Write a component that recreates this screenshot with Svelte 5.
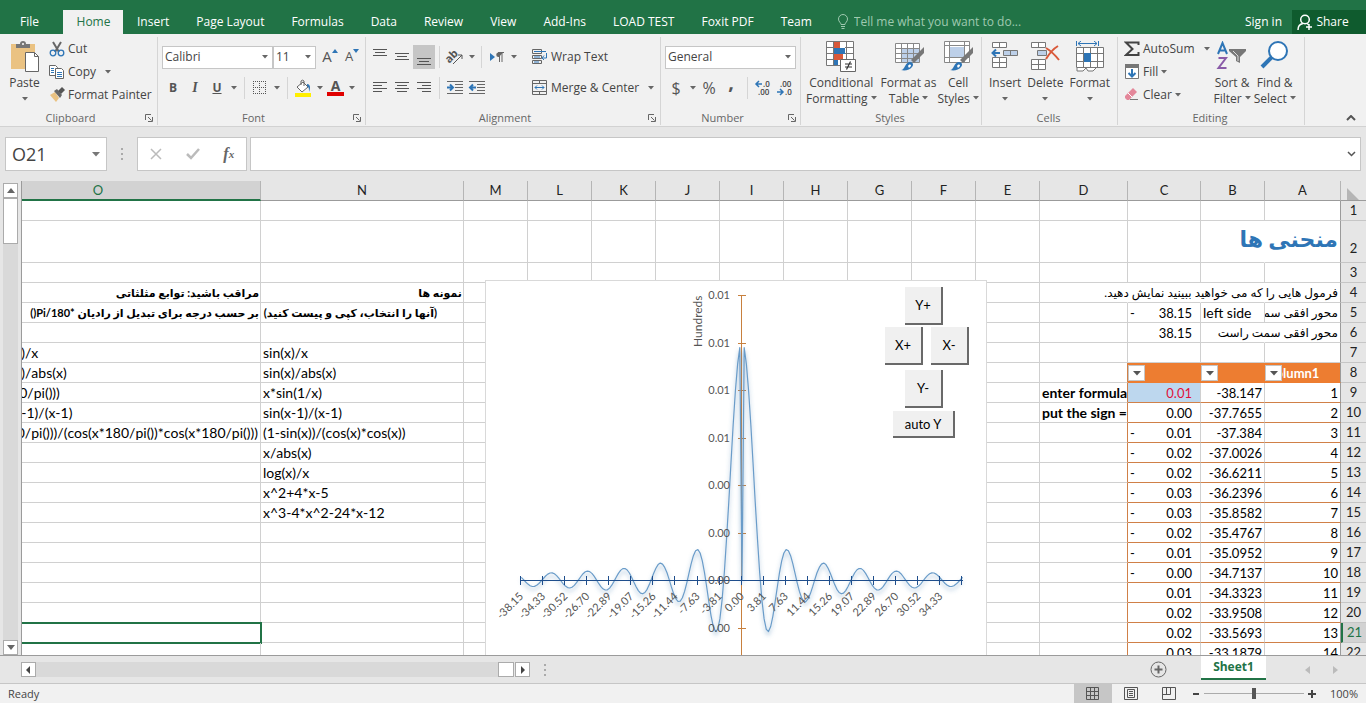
<script>
  const tabs = ['Insert', 'Page Layout', 'Formulas', 'Data', 'Review', 'View', 'Add-Ins', 'LOAD TEST', 'Foxit PDF', 'Team'];

  // sheet runs right to left, so A is the rightmost column
  const columns = [
    { name: 'A', width: 76 },
    { name: 'B', width: 64 },
    { name: 'C', width: 73 },
    { name: 'D', width: 88 },
    ...['E', 'F', 'G', 'H', 'I', 'J', 'K', 'L', 'M'].map((name) => ({ name, width: 64 })),
    { name: 'N', width: 203 },
    { name: 'O', width: 325 },
  ];

  const rows = Array.from({ length: 22 }, (_, i) => i + 1);

  const cells = {
    A2: { text: 'منحنی ها', cls: 'title' },
    A4: { text: 'فرمول هایی را که می خواهید ببینید نمایش دهید.', cls: 'fa' },
    A5: { text: 'محور افقی سمت', cls: 'fa clip' },
    A6: { text: 'محور افقی سمت راست', cls: 'fa' },
    B5: { text: 'left side', cls: 'ltr' },
    C5: { text: '38.15', cls: 'acc', neg: true },
    C6: { text: '38.15', cls: 'acc' },
    D9: { text: 'enter formula', cls: 'ltr strong clip' },
    D10: { text: 'put the sign =', cls: 'ltr strong clip' },
    N4: { text: 'نمونه ها', cls: 'fa strong' },
    N5: { text: '(آنها را انتخاب، کپی و پیست کنید)', cls: 'fa strong far' },
    O4: { text: 'مراقب باشید: توابع مثلثاتی', cls: 'fa strong' },
    O5: { text: 'بر حسب درجه برای تبدیل از رادیان *Pi/180()', cls: 'fa strong' },
  };

  const formulas = [
    ['sin(x)/x', 'sin(x*180/pi())/x'],
    ['sin(x)/abs(x)', 'sin(x*180/pi())/abs(x)'],
    ['x*sin(1/x)', 'x*sin(1/(x*180/pi()))'],
    ['sin(x-1)/(x-1)', 'sin(x*180/pi()-1)/(x-1)'],
    ['(1-sin(x))/(cos(x)*cos(x))', '(1-sin(x*180/pi()))/(cos(x*180/pi())*cos(x*180/pi()))'],
    ['x/abs(x)'],
    ['log(x)/x'],
    ['x^2+4*x-5'],
    ['x^3-4*x^2-24*x-12'],
  ];
  formulas.forEach(([n, o], i) => {
    cells['N' + (7 + i)] = { text: n, cls: 'ltr' };
    if (o) cells['O' + (7 + i)] = { text: o, cls: o.length > 40 ? 'ltr long' : 'ltr' };
  });

  const values = [
    ['-38.147', '0.01'],
    ['-37.7655', '0.00'],
    ['-37.384', '-0.01'],
    ['-37.0026', '-0.02'],
    ['-36.6211', '-0.02'],
    ['-36.2396', '-0.03'],
    ['-35.8582', '-0.03'],
    ['-35.4767', '-0.02'],
    ['-35.0952', '-0.01'],
    ['-34.7137', '-0.00'],
    ['-34.3323', '0.01'],
    ['-33.9508', '0.02'],
    ['-33.5693', '0.02'],
    ['-33.1879', '0.03'],
  ];
  values.forEach(([x, y], i) => {
    cells['A' + (9 + i)] = { text: String(i + 1), cls: 'num' };
    cells['B' + (9 + i)] = { text: x, cls: 'num' };
    cells['C' + (9 + i)] = { text: y.replace('-', ''), cls: i ? 'acc' : 'acc picked', neg: y[0] === '-' };
  });

  // gridlines hidden under text that spills into the next column
  const spilled = ['B2', 'B4', 'C4', 'D4', 'B6'];

  function cellClass(col, row) {
    const id = col + row;
    const list = [];
    if (spilled.includes(id)) list.push('spilled');
    if ('ABC'.includes(col) && row === 8) list.push('filter-head');
    if ('ABC'.includes(col) && row > 8) list.push('banded');
    if (col === 'D' && row > 7) list.push('edge');
    if (id === 'O21') list.push('active');
    if (id === 'C9') list.push('input-cell');
    return list.join(' ');
  }

  // chart geometry
  const axisX = 742;
  const axisY = 580;
  const step = 0.38147;
  let curve = '';
  for (let i = -100; i <= 100; i++) {
    const x = i * step;
    const y = i === 0 ? 0 : Math.sin(x) / x;
    curve += `${i === -100 ? 'M' : 'L'}${(axisX + x * 5.786).toFixed(1)} ${(axisY - y * 238).toFixed(1)}`;
  }
  const xLabels = ['-38.15', '-34.33', '-30.52', '-26.70', '-22.89', '-19.07', '-15.26', '-11.44', '-7.63', '-3.81', '0.00', '3.81', '7.63', '11.44', '15.26', '19.07', '22.89', '26.70', '30.52', '34.33'];
  const yLabels = ['0.01', '0.01', '0.01', '0.01', '0.00', '0.00', '0.00', '0.00'];
  const tickX = (i) => 521 + i * 22.07;
  const tickY = (i) => 295 + i * 47.5;

  let fontName = $state('Calibri');
  let fontSize = $state('11');
  let numberFormat = $state('General');
</script>

{#snippet caret()}
  <svg class="caret" width="6" height="4" viewBox="0 0 6 4"><path d="M0 0h6L3 3.5z" fill="#666" /></svg>
{/snippet}

{#snippet launcher()}
  <button class="launcher" aria-label="More options">
    <svg width="8" height="8" viewBox="0 0 8 8"><path d="M.5 6V.5H6M3 3l3.5 3.5M7.5 3v4.5H3" fill="none" stroke="#666" /></svg>
  </button>
{/snippet}

{#snippet lines(list)}
  <svg width="16" height="16" viewBox="0 0 16 16">
    {#each list as [x1, x2, y]}<path d="M{x1} {y}.5H{x2}" stroke="#555" />{/each}
  </svg>
{/snippet}

{#snippet indent(toRight)}
  <svg width="18" height="14" viewBox="0 0 18 14">
    <path d="M1 .5h16M9 3.5h8M9 6.5h8M9 9.5h8M1 12.5h16" stroke="#666" />
    <path d={toRight ? 'M1 6.5h6M4 3.5l3 3-3 3' : 'M2 6.5h6M5 3.5l-3 3 3 3'} fill="none" stroke="#2e75b6" stroke-width="2" />
  </svg>
{/snippet}

{#snippet brush()}
  <path d="M31 6v6L21 22l-3-3z" fill="#777" />
  <path d="M8 29c4 0 4-8 9-8 3 0 4 3 2 5-2 3-7 4-11 3z" fill="#2e75b6" />
  <path d="M15 25c1-2 3-2 3 0l-2 2z" fill="#fff" />
{/snippet}

<div class="excel">
  <header class="tabs">
    <button class="tab file">File</button>
    <button class="tab home">Home</button>
    {#each tabs as tab}
      <button class="tab">{tab}</button>
    {/each}
    <label class="tell">
      <svg width="12" height="16" viewBox="0 0 12 16" fill="none" stroke="#9fc9b0">
        <path d="M4 10.5C4 8.5 1.5 8 1.5 5a4.5 4.5 0 0 1 9 0c0 3-2.5 3.5-2.5 5.5zM4 12.5h4M4.5 14.5h3" />
      </svg>
      <input placeholder="Tell me what you want to do..." />
    </label>
    <button class="signin">Sign in</button>
    <button class="share">
      <svg width="16" height="17" viewBox="0 0 16 17" fill="none" stroke="#fff" stroke-width="1.5">
        <circle cx="8" cy="5.5" r="4.3" /><path d="M1 16c0-4 2-6 5-6.5M10 9.5l2 1.5M12 10v6M9 13h6" />
      </svg>
      Share
    </button>
  </header>

  <section class="ribbon">
    <div class="group">
      <div class="body">
        <button class="big paste">
          <svg width="30" height="32" viewBox="0 0 30 32">
            <path d="M1 3h24v25H1z" fill="#eac282" />
            <path d="M6 7V3h4a3 3 0 0 1 6 0h4v4z" fill="#777" /><circle cx="13" cy="3" r="1" fill="#fff" />
            <path d="M15.5 11.5h9l4 4v15h-13z" fill="#fff" stroke="#666" /><path d="M24.5 11.5v4h4" fill="none" stroke="#666" />
          </svg>
          <span>Paste</span>
          {@render caret()}
        </button>
        <div class="stack">
          <button class="small">
            <svg width="16" height="16" viewBox="0 0 16 16" fill="none">
              <path d="M4 1l6 10M12 1L6 11" stroke="#666" stroke-width="2" />
              <circle cx="4" cy="12" r="2.8" stroke="#2e75b6" stroke-width="1.3" /><circle cx="12" cy="12" r="2.8" stroke="#2e75b6" stroke-width="1.3" />
            </svg>
            Cut
          </button>
          <button class="small">
            <svg width="16" height="16" viewBox="0 0 16 16" fill="#fff" stroke="#666">
              <path d="M.5 1.5h6l2 2v8h-8z" /><path d="M6.500 4.5h6l2 2v8h-8z" />
              <path d="M2 4.5h3M2 6.500h3M2 8.5h3M8 8.5h5M8 10.5h5M8 12.5h5" stroke="#2e75b6" />
            </svg>
            Copy <span class="push">{@render caret()}</span>
          </button>
          <button class="small">
            <svg width="16" height="16" viewBox="0 0 16 16">
              <path d="M1 8l5-3 4 6-3 4z" fill="#eac282" /><path d="M5 4l3-2 5 6-2 3z" fill="#666" /><path d="M9 4l4-4 3 3-4 4z" fill="#555" />
            </svg>
            Format Painter
          </button>
        </div>
      </div>
      <footer>Clipboard {@render launcher()}</footer>
    </div>

    <div class="group">
      <div class="body col">
        <div class="line">
          <span class="combo name">
            <select aria-label="Font" bind:value={fontName}><option>Calibri</option></select>{@render caret()}
          </span>
          <span class="combo size">
            <select aria-label="Font size" bind:value={fontSize}><option>11</option></select>{@render caret()}
          </span>
          <button class="tool grow">A<svg width="6" height="4" viewBox="0 0 6 4"><path d="M0 4h6L3 0z" fill="#2e75b6" /></svg></button>
          <button class="tool shrink">A<svg width="6" height="4" viewBox="0 0 6 4"><path d="M0 0h6L3 4z" fill="#2e75b6" /></svg></button>
        </div>
        <div class="line">
          <button class="tool bold">B</button>
          <button class="tool italic">I</button>
          <button class="tool underline">U</button>
          <button class="drop" aria-label="Underline styles">{@render caret()}</button>
          <i class="sep"></i>
          <button class="tool" aria-label="Borders">
            <svg width="14" height="14" viewBox="0 0 14 14" fill="none" stroke="#555" stroke-dasharray="1 1">
              <path d="M0 .5h13M0 6.500h13M0 12.5h13M.5 0v13M6.500 0v13M12.5 0v13" />
            </svg>
          </button>
          <button class="drop" aria-label="Border styles">{@render caret()}</button>
          <i class="sep"></i>
          <button class="tool" aria-label="Fill color">
            <svg width="18" height="18" viewBox="0 0 18 18">
              <path d="M3 8l6-5 5 5-6 5z" fill="#fff" stroke="#666" /><path d="M7 6V2a2 2 0 0 1 3 0v5" fill="none" stroke="#666" />
              <path d="M13 5c3 0 4 3 2 8 0-3 0-5-2-6z" fill="#2e75b6" /><path d="M1 14h16v4H1z" fill="#ffef00" />
            </svg>
          </button>
          <button class="drop" aria-label="Fill colors">{@render caret()}</button>
          <button class="tool font-color">A</button>
          <button class="drop" aria-label="Font colors">{@render caret()}</button>
        </div>
      </div>
      <footer>Font {@render launcher()}</footer>
    </div>

    <div class="group">
      <div class="body">
        <div class="col align">
          <div class="line">
            <button class="tool" aria-label="Top align">{@render lines([[1, 15, 0], [3, 13, 3], [1, 15, 6]])}</button>
            <button class="tool" aria-label="Middle align">{@render lines([[1, 15, 4], [3, 13, 7], [1, 15, 10]])}</button>
            <button class="tool on" aria-label="Bottom align">{@render lines([[1, 15, 9], [3, 13, 12], [1, 15, 15]])}</button>
            <i class="sep"></i>
            <button class="tool" aria-label="Orientation">
              <svg class="loose" width="18" height="16" viewBox="0 0 18 16">
                <text x="0" y="11" class="ab" transform="rotate(-45 6 9)">ab</text>
                <path d="M7 15l9-9M12 6h4v4" fill="none" stroke="#555" />
              </svg>
            </button>
            <button class="drop" aria-label="Orientations">{@render caret()}</button>
            <i class="sep"></i>
            <button class="tool" aria-label="Text direction">
              <svg width="14" height="12" viewBox="0 0 14 12">
                <path d="M0 2v8l5-4z" fill="#2e75b6" /><path d="M13 1.5H8.5a2 2 0 0 0 0 4.5H9" fill="#666" /><path d="M9.5 1v10M12 1v10M8 1.5h6" stroke="#666" />
              </svg>
            </button>
            <button class="drop" aria-label="Directions">{@render caret()}</button>
          </div>
          <div class="line">
            <button class="tool" aria-label="Align left">{@render lines([[1, 15, 2], [1, 10, 5], [1, 15, 8], [1, 10, 11]])}</button>
            <button class="tool" aria-label="Center">{@render lines([[1, 15, 2], [3, 13, 5], [1, 15, 8], [3, 13, 11]])}</button>
            <button class="tool" aria-label="Align right">{@render lines([[1, 15, 2], [6, 15, 5], [1, 15, 8], [6, 15, 11]])}</button>
            <i class="sep"></i>
            <button class="tool" aria-label="Increase indent">{@render indent(true)}</button>
            <button class="tool" aria-label="Decrease indent">{@render indent(false)}</button>
          </div>
        </div>
        <div class="col wrap">
          <button class="small">
            <svg width="16" height="16" viewBox="0 0 16 16" fill="none" stroke="#666">
              <path d="M.5 .5h9v4h-9zM.5 6.500h9v3h-9zM.5 11.500h9v3h-9z" /><path d="M2 2.5h12M2 8h6M2 13h5M14.5 4v5h-4M12 6.500L10 9l2 2" stroke="#2e75b6" />
            </svg>
            Wrap Text
          </button>
          <button class="small">
            <svg width="16" height="16" viewBox="0 0 16 16" fill="none" stroke="#666">
              <path d="M.5 .5h14v14H.5zM.5 3.5h14M.5 11.500h14M7.5 .5v3M7.5 11.500v3" /><path d="M3 7.5h9M5 5.5l-2 2 2 2M10 5.5l2 2-2 2" stroke="#2e75b6" />
            </svg>
            Merge &amp; Center <span class="push">{@render caret()}</span>
          </button>
        </div>
      </div>
      <footer>Alignment {@render launcher()}</footer>
    </div>

    <div class="group">
      <div class="body col">
        <div class="line">
          <span class="combo format">
            <select aria-label="Number format" bind:value={numberFormat}><option>General</option></select>{@render caret()}
          </span>
        </div>
        <div class="line">
          <button class="tool sign">$</button>
          <button class="drop" aria-label="Currencies">{@render caret()}</button>
          <button class="tool sign">%</button>
          <button class="tool comma">,</button>
          <i class="sep"></i>
          <button class="tool" aria-label="Increase decimal">
            <svg class="loose" width="16" height="16" viewBox="0 0 16 16"><text x="8" y="7" class="dec">.0</text><text x="3" y="15" class="dec">.00</text><path d="M1 4h6M4 1L1 4l3 3" fill="none" stroke="#2e75b6" stroke-width="1.5" /></svg>
          </button>
          <button class="tool" aria-label="Decrease decimal">
            <svg class="loose" width="16" height="16" viewBox="0 0 16 16"><text x="3" y="7" class="dec">.00</text><text x="8" y="15" class="dec">.0</text><path d="M0 12h6M3 9l3 3-3 3" fill="none" stroke="#2e75b6" stroke-width="1.5" /></svg>
          </button>
        </div>
      </div>
      <footer>Number {@render launcher()}</footer>
    </div>

    <div class="group">
      <div class="body styles">
        <button class="big">
          <svg width="32" height="32" viewBox="0 0 32 32">
            <path d="M1.5 .5h27v24h-27z" fill="#fff" />
            <path d="M9 1h6v6H9zM9 13h9v6H9z" fill="#d9593a" /><path d="M9 7h11v6H9zM9 19h4v6H9z" fill="#2e75b6" />
            <path d="M1.5 .5h27v24h-27zM1.5 6.500h7M20 6.500h8.500M1.5 12.5h7M20 12.5h8.500M1.5 18.5h7M8.5 .5v24M21.500 .5v24" fill="none" stroke="#777" />
            <path d="M15.5 18.5h15v12h-15z" fill="#fff" stroke="#666" /><path d="M20 23h7M20 26h7M25.500 20.500l-4 8" stroke="#333" stroke-width="1.2" />
          </svg>
          <span>Conditional</span><span>Formatting {@render caret()}</span>
        </button>
        <button class="big">
          <svg width="32" height="32" viewBox="0 0 32 32">
            <path d="M2.5 2.5h24v19h-24z" fill="#fff" /><path d="M8 8h18v13H8z" fill="#bdd0e9" />
            <path d="M2.5 2.5h24v19h-24zM2.5 7.5h24M2.5 12.5h24M2.5 17.5h24M8.5 2.5v19M14.5 2.5v19M20.5 2.5v19" fill="none" stroke="#888" />
            {@render brush()}
          </svg>
          <span>Format as</span><span>Table {@render caret()}</span>
        </button>
        <button class="big">
          <svg width="32" height="32" viewBox="0 0 32 32">
            <path d="M2.5 .5h25v21h-25z" fill="#fff" />
            <path d="M2.5 .5h25v21h-25zM2.5 4.5h25M2.5 16.5h25M7.5 .5v21M22.5 .5v21" fill="none" stroke="#888" /><path d="M8 6h14v10H8z" fill="#bdd0e9" />
            {@render brush()}
          </svg>
          <span>Cell</span><span>Styles {@render caret()}</span>
        </button>
      </div>
      <footer>Styles</footer>
    </div>

    <div class="group">
      <div class="body cells">
        <button class="big">
          <svg width="30" height="32" viewBox="0 0 30 32" fill="#fff" stroke="#777">
            <path d="M2.5 1.5h14v5h-14zM9.5 1.5v5M2.5 16.5h14v10h-14zM2.5 21.5h14M9.5 16.5v10" />
            <path d="M13.5 9.5h14v5h-14zM20.5 9.5v5" fill="#bdd0e9" /><path d="M2 12h8M6 8.5L2.5 12 6 15.5" fill="none" stroke="#2e75b6" stroke-width="2" />
          </svg>
          <span>Insert</span>{@render caret()}
        </button>
        <button class="big">
          <svg width="30" height="32" viewBox="0 0 30 32" fill="#fff" stroke="#777">
            <path d="M1.5 1.5h14v5h-14zM8.5 1.5v5M1.5 18.5h14v10h-14zM1.5 23.5h14M8.5 18.5v10" />
            <path d="M7.5 9.5h9v5h-9z" fill="#bdd0e9" /><path d="M16 7c5 3 9 7 13 12M28 5c-5 3-9 8-12 13" fill="none" stroke="#d9593a" stroke-width="2" />
          </svg>
          <span>Delete</span>{@render caret()}
        </button>
        <button class="big">
          <svg width="30" height="32" viewBox="0 0 30 32" fill="#fff" stroke="#777">
            <path d="M1.5 6.500h27v20h-27z" /><path d="M1.5 12.5h27M1.5 20.5h27M8.5 6.500v20M15.5 6.500v20M22.5 6.500v20" fill="none" /><path d="M9 12h7v9H9z" fill="#2e75b6" stroke="none" />
            <path d="M2 27v3h6l3-3 2 3h5l3-3" /><path d="M1.5 0v5M23.5 0v5M3 2.5h19M6 0L3 2.5 6 5M19 0l3 2.5L19 5" fill="none" stroke="#2e75b6" />
          </svg>
          <span>Format</span>{@render caret()}
        </button>
      </div>
      <footer>Cells</footer>
    </div>

    <div class="group">
      <div class="body editing">
        <div class="stack">
          <button class="small">
            <svg width="16" height="16" viewBox="0 0 16 16"><path d="M14.5 4V1.500H2L8.5 8 2 14h12.5v-3" fill="none" stroke="#444" stroke-width="2" /></svg>
            AutoSum <span class="push">{@render caret()}</span>
          </button>
          <button class="small">
            <svg width="16" height="16" viewBox="0 0 16 16"><path d="M1.5 .5h13v14h-13z" fill="#fff" stroke="#777" /><path d="M1 0h14v4H1z" fill="#777" /><path d="M8 5v7M4.5 9L8 12.5 11.5 9" fill="none" stroke="#2e75b6" stroke-width="2" /></svg>
            Fill {@render caret()}
          </button>
          <button class="small">
            <svg width="16" height="16" viewBox="0 0 16 16"><path d="M1 9l8-8 4 4-8 8H3l-2-2z" fill="#e4879a" /><path d="M4 6l4 4" stroke="#fff" /><path d="M6 12.5h8" stroke="#777" /></svg>
            Clear {@render caret()}
          </button>
        </div>
        <button class="big sort">
          <svg width="32" height="32" viewBox="0 0 32 32">
            <path d="M2 13L6.500 2 11 13M3.500 9.5h6" fill="none" stroke="#2e75b6" stroke-width="2" /><path d="M2.5 17H10L2.5 27h8" fill="none" stroke="#8a5ba8" stroke-width="2" />
            <path d="M13 8h17v2l-6 6v6l-4-2v-4l-7-6z" fill="#777" /><path d="M17 10l5 5v5" fill="none" stroke="#ddd" />
          </svg>
          <span>Sort &amp;</span><span>Filter {@render caret()}</span>
        </button>
        <button class="big">
          <svg width="30" height="32" viewBox="0 0 30 32"><path d="M2 26l10-10" stroke="#2e75b6" stroke-width="4" /><circle cx="18" cy="10" r="9" fill="#fff" stroke="#2e75b6" stroke-width="2" /></svg>
          <span>Find &amp;</span><span>Select {@render caret()}</span>
        </button>
      </div>
      <footer>Editing</footer>
    </div>

    <button class="collapse" aria-label="Collapse the ribbon">
      <svg width="10" height="6" viewBox="0 0 10 6"><path d="M1 5l4-4 4 4" fill="none" stroke="#555" stroke-width="2" /></svg>
    </button>
  </section>

  <section class="formula-bar">
    <div class="name-box">
      <input aria-label="Name box" value="O21" />
      <svg width="8" height="5" viewBox="0 0 8 5"><path d="M0 0h8L4 4.5z" fill="#777" /></svg>
    </div>
    <span class="dots"></span>
    <div class="actions">
      <button aria-label="Cancel"><svg width="12" height="12" viewBox="0 0 12 12"><path d="M1 1l10 10M11 1L1 11" stroke="#bbb" stroke-width="1.5" /></svg></button>
      <button aria-label="Enter"><svg width="14" height="12" viewBox="0 0 14 12"><path d="M1 6l4 4 8-9" fill="none" stroke="#bbb" stroke-width="2.5" /></svg></button>
      <button class="fx">f<sub>x</sub></button>
    </div>
    <div class="formula">
      <input aria-label="Formula" />
      <svg width="9" height="6" viewBox="0 0 9 6"><path d="M1 1l3.500 3.500L8 1" fill="none" stroke="#555" stroke-width="1.5" /></svg>
    </div>
  </section>

  <main class="workspace">
    <div class="vscroll">
      <button class="arrow" aria-label="Scroll up"><svg width="8" height="5" viewBox="0 0 8 5"><path d="M0 5h8L4 0z" fill="#666" /></svg></button>
      <span class="thumb"></span>
      <span class="track"></span>
      <button class="arrow" aria-label="Scroll down"><svg width="8" height="5" viewBox="0 0 8 5"><path d="M0 0h8L4 5z" fill="#666" /></svg></button>
    </div>

    <div class="sheet" dir="rtl">
      <table>
        <colgroup>
          <col style="width: 25px" />
          {#each columns as col}
            <col style="width: {col.width}px" />
          {/each}
        </colgroup>
        <thead>
          <tr>
            <th class="corner"><svg width="12" height="12" viewBox="0 0 12 12"><path d="M0 0v12h12z" fill="#b5b5b5" /></svg></th>
            {#each columns as col}
              <th class:current={col.name === 'O'}>{col.name}</th>
            {/each}
          </tr>
        </thead>
        <tbody>
          {#each rows as row}
            <tr class:tall={row === 2}>
              <th class:current={row === 21}>{row}</th>
              {#each columns as col}
                {@const cell = cells[col.name + row]}
                <td class={cellClass(col.name, row)}>
                  {#if cell}
                    <div class="text {cell.cls}">
                      <span>{cell.text}</span>
                      {#if cell.neg}<span>-</span>{/if}
                    </div>
                  {:else if row === 8 && 'ABC'.includes(col.name)}
                    {#if col.name === 'A'}<div class="text ltr heading">Column1</div>{/if}
                    <button class="filter" aria-label="Filter"><svg width="8" height="5" viewBox="0 0 8 5"><path d="M0 0h8L4 4.5z" fill="#555" /></svg></button>
                  {/if}
                </td>
              {/each}
            </tr>
          {/each}
        </tbody>
      </table>

      <div class="chart" dir="ltr">
        <svg width="500" height="420" viewBox="486 281 500 420">
          <defs>
            <filter id="glow" x="-10%" y="-10%" width="120%" height="120%">
              <feDropShadow dx="0" dy="3" stdDeviation="2" flood-color="#4a7fb0" flood-opacity="0.6" />
            </filter>
          </defs>
          <g stroke="#c8803e" fill="none">
            <path d="M741.5 295v400" />
            {#each yLabels as _, i}<path d="M738 {Math.round(tickY(i))}.5h8" />{/each}
          </g>
          <path d={curve} fill="none" stroke="#6a9cc9" stroke-width="1.2" stroke-linejoin="round" filter="url(#glow)" />
          <g stroke="#1f4e8c" fill="none">
            <path d="M521 580.5h442" />
            {#each Array(21) as _, i}<path d="M{Math.round(tickX(i)) - 1}.5 576v9" />{/each}
          </g>
          {#each yLabels as label, i}
            <text x="730" y={tickY(i) + 4} class="label end">{label}</text>
          {/each}
          {#each xLabels as label, i}
            <text class="label end" transform="translate({tickX(i) + 3} 597) rotate(-45)">{label}</text>
          {/each}
          <text class="label unit" transform="translate(702 347) rotate(-90)">Hundreds</text>
        </svg>
        <button class="y-plus">Y+</button>
        <button class="x-plus">X+</button>
        <button class="x-minus">X-</button>
        <button class="y-minus">Y-</button>
        <button class="auto">auto Y</button>
      </div>
    </div>
  </main>

  <div class="sheet-bar">
    <div class="hscroll">
      <button class="arrow" aria-label="Scroll left"><svg width="5" height="8" viewBox="0 0 5 8"><path d="M4 0v8L0 4z" fill="#444" /></svg></button>
      <span class="track"></span>
      <span class="thumb"></span>
      <button class="arrow" aria-label="Scroll right"><svg width="5" height="8" viewBox="0 0 5 8"><path d="M1 0v8l4-4z" fill="#444" /></svg></button>
    </div>
    <span class="dots"></span>
    <button class="add" aria-label="New sheet">
      <svg width="17" height="17" viewBox="0 0 17 17" fill="none" stroke="#666"><circle cx="8.5" cy="8.5" r="7.5" /><path d="M4.5 8.5h8M8.5 4.5v8" stroke-width="2" /></svg>
    </button>
    <button class="sheet-tab">Sheet1</button>
    <button class="nav" aria-label="Previous sheet"><svg width="5" height="8" viewBox="0 0 5 8"><path d="M5 0v8L0 4z" fill="#bbb" /></svg></button>
    <button class="nav" aria-label="Next sheet"><svg width="5" height="8" viewBox="0 0 5 8"><path d="M0 0v8l5-4z" fill="#bbb" /></svg></button>
  </div>

  <footer class="status">
    <span class="ready">Ready</span>
    <button class="view on" aria-label="Normal"><svg width="14" height="14" viewBox="0 0 14 14" fill="none" stroke="#555"><path d="M.5 .5h12v12H.5zM.5 4.5h12M.5 8.5h12M4.5 .5v12M8.5 .5v12" /></svg></button>
    <button class="view" aria-label="Page layout"><svg width="14" height="14" viewBox="0 0 14 14" fill="none" stroke="#555"><path d="M.5 .5h13v12H.5zM3.5 2.5h7v8h-7zM5 4.5h4M5 6.500h4M5 8.5h4" /></svg></button>
    <button class="view" aria-label="Page break"><svg width="14" height="14" viewBox="0 0 14 14" fill="none" stroke="#555"><path d="M.5 .5h13v12H.5zM.5 7.5h8v-7M4.5 .5v7" /></svg></button>
    <button class="zoom" aria-label="Zoom out"><svg width="8" height="8" viewBox="0 0 8 8"><path d="M1 4h6" stroke="#444" stroke-width="2" /></svg></button>
    <input type="range" aria-label="Zoom" min="0" max="100" value="50" />
    <button class="zoom" aria-label="Zoom in"><svg width="8" height="8" viewBox="0 0 8 8"><path d="M0 4h8M4 0v8" stroke="#444" stroke-width="2" /></svg></button>
    <span class="percent">100%</span>
  </footer>
</div>

<style>
  :global(body) {
    margin: 0;
  }

  .excel {
    display: flex;
    flex-direction: column;
    height: 100vh;
    overflow: hidden;
    background: #e6e6e6;
    color: #444;
    font-family: 'Open Sans', 'Noto Sans', sans-serif;
    font-size: 12px;
    line-height: 16px;
  }

  .excel * {
    box-sizing: border-box;
  }

  svg {
    display: block;
    flex: none;
  }

  .loose {
    overflow: visible;
  }

  button,
  input,
  select {
    margin: 0;
    padding: 0;
    border: 0;
    background: none;
    color: inherit;
    font: inherit;
  }

  button {
    display: flex;
    align-items: center;
    justify-content: center;
    white-space: nowrap;
  }

  /* title tabs */
  .tabs {
    display: flex;
    align-items: flex-end;
    height: 34px;
    flex: none;
    background: #217346;
    color: #fff;
  }

  .tab {
    height: 24px;
    padding: 0 13px 0 14px;
  }

  .file {
    width: 58px;
    margin-right: 5px;
  }

  .home {
    width: 60px;
    background: #f1f1f1;
    color: #217346;
  }

  .tell {
    display: flex;
    align-items: center;
    flex: 1;
    height: 24px;
    gap: 5px;
    margin-left: 12px;
  }

  .tell input {
    width: 200px;
  }

  .tell input::placeholder {
    color: #9fc9b0;
    opacity: 1;
  }

  .signin {
    height: 24px;
    padding: 0 10px;
  }

  .share {
    width: 74px;
    height: 24px;
    gap: 3px;
    padding-right: 12px;
    background: #0f5b2e;
  }

  /* ribbon */
  .ribbon {
    display: grid;
    grid-template-columns: 158px 208px 295px 140px 181px 136px 187px 1fr;
    flex: none;
    height: 93px;
    padding: 3px 0 1px;
    border-bottom: 1px solid #d2d2d2;
    background: #f1f1f1;
  }

  .group {
    display: flex;
    flex-direction: column;
    border-right: 1px solid #d5d5d5;
  }

  .group footer {
    display: flex;
    justify-content: center;
    position: relative;
    padding-right: 16px;
    color: #666;
    font-size: 11px;
    line-height: 14px;
  }

  .group footer:not(:has(button)) {
    padding-right: 2px;
  }

  .launcher {
    position: absolute;
    right: 4px;
    top: 3px;
  }

  .body {
    display: flex;
    flex: 1;
  }

  .col {
    display: flex;
    flex-direction: column;
    gap: 7px;
    padding: 8px 0 0 4px;
  }

  .line {
    display: flex;
    align-items: center;
    height: 24px;
  }

  .big {
    flex-direction: column;
    justify-content: flex-start;
    padding-top: 4px;
  }

  .big svg:first-child {
    margin-bottom: 2px;
  }

  .big span {
    display: flex;
    align-items: center;
    gap: 3px;
  }

  .big > .caret {
    margin-top: 6px;
  }

  .paste {
    width: 49px;
  }

  .stack {
    display: flex;
    flex-direction: column;
  }

  .small {
    justify-content: flex-start;
    height: 23px;
    gap: 3px;
  }

  .push {
    margin-left: 6px;
  }

  .combo {
    display: flex;
    align-items: center;
    position: relative;
    height: 23px;
    border: 1px solid #c6c6c6;
    background: #fff;
  }

  .combo select {
    flex: 1;
    height: 21px;
    padding-left: 2px;
    appearance: none;
  }

  .combo .caret {
    position: absolute;
    right: 4px;
    pointer-events: none;
  }

  .name {
    width: 111px;
  }

  .size {
    width: 43px;
  }

  .format {
    width: 131px;
  }

  .tool {
    width: 22px;
    height: 24px;
    color: #555;
  }

  .on {
    background: #c6c6c6;
  }

  .drop {
    width: 11px;
    height: 24px;
  }

  .sep {
    width: 1px;
    height: 22px;
    margin: 0 4px 0 5px;
    background: #d5d5d5;
  }

  .grow,
  .shrink {
    align-items: flex-start;
    font-size: 15px;
    line-height: 22px;
  }

  .grow {
    margin-left: 3px;
  }

  .shrink {
    font-size: 13px;
  }

  .grow svg,
  .shrink svg {
    margin-top: 4px;
  }

  .bold,
  .underline {
    font-weight: 700;
  }

  .italic {
    font-family: 'Liberation Serif', serif;
    font-size: 14px;
    font-style: italic;
    font-weight: 700;
  }

  .underline {
    text-decoration: underline;
  }

  .font-color {
    width: 17px;
    height: 16px;
    margin: 0 2px;
    border-bottom: 4px solid #e00000;
    font-size: 14px;
    font-weight: 700;
  }

  .align {
    width: 160px;
    padding-left: 3px;
  }

  .align .sep {
    margin: 0 4px;
  }

  .wrap {
    padding-left: 6px;
  }

  .wrap .small {
    height: 24px;
  }

  .ab {
    font-size: 11px;
    font-weight: 700;
    fill: #555;
  }

  .dec {
    font-size: 8px;
    font-weight: 600;
    fill: #444;
  }

  .sign {
    font-size: 16px;
  }

  .comma {
    padding-bottom: 12px;
    font-size: 20px;
    font-weight: 700;
  }

  .styles {
    padding-left: 5px;
    gap: 4px;
  }

  .styles .big:last-child {
    margin-left: -3px;
  }

  .cells {
    padding-left: 7px;
    gap: 6px;
  }

  .editing {
    padding-left: 6px;
  }

  .sort {
    margin-left: 4px;
    margin-right: 3px;
  }

  .collapse {
    align-self: end;
    justify-self: end;
    width: 30px;
    height: 14px;
  }

  /* formula bar */
  .formula-bar {
    display: flex;
    align-items: center;
    flex: none;
    height: 54px;
    padding: 0 5px;
  }

  .name-box,
  .actions,
  .formula {
    display: flex;
    align-items: center;
    height: 34px;
    border: 1px solid #c6c6c6;
    background: #fff;
  }

  .name-box {
    width: 102px;
    padding: 0 6px;
    font-size: 18px;
  }

  .name-box input {
    flex: 1;
    width: 60px;
  }

  .dots {
    width: 2px;
    height: 12px;
    margin: 0 14px;
    background: repeating-linear-gradient(#aaa 0 2px, transparent 2px 5px);
  }

  .actions {
    justify-content: space-around;
    width: 110px;
    margin-right: 3px;
  }

  .fx {
    color: #666;
    font-family: 'Liberation Serif', serif;
    font-size: 16px;
    font-style: italic;
    font-weight: 700;
  }

  .fx sub {
    font-size: 11px;
  }

  .formula {
    flex: 1;
    padding-right: 4px;
  }

  .formula input {
    flex: 1;
  }

  /* sheet */
  .workspace {
    display: flex;
    flex: 1;
    min-height: 0;
    border-bottom: 1px solid #9b9b9b;
  }

  .vscroll {
    display: flex;
    flex-direction: column;
    flex: none;
    width: 21px;
    padding: 2px 3px 0;
  }

  .arrow,
  .thumb {
    flex: none;
    width: 15px;
    height: 15px;
    border: 1px solid #ababab;
    background: #fff;
  }

  .vscroll .thumb {
    height: 46px;
  }

  .track {
    flex: 1;
    background: #d9d9d9;
  }

  .sheet {
    position: relative;
    flex: 1;
    min-width: 0;
    overflow: hidden;
    border-left: 1px solid #9b9b9b;
    background: #fff;
    color: #000;
    font-family: Lato, 'DejaVu Sans', sans-serif;
    font-size: 13px;
  }

  table {
    width: max(100%, 1430px);
    table-layout: fixed;
    border-collapse: separate;
    border-spacing: 0;
  }

  tr {
    height: 20px;
  }

  .tall {
    height: 42px;
  }

  th {
    height: 20px;
    padding: 0;
    border-bottom: 1px solid #c6c6c6;
    background: #e6e6e6;
    color: #222;
    font-weight: 400;
    line-height: 19px;
    vertical-align: bottom;
    text-align: center;
  }

  .tall th {
    line-height: 28px;
  }

  thead th {
    border-right: 1px solid #b5b5b5;
    border-bottom-color: #9b9b9b;
  }

  thead .corner {
    padding-right: 7px;
    border-right: 0;
  }

  thead .current {
    border-bottom: 2px solid #217346;
    background: #d2d2d2;
    color: #217346;
    line-height: 18px;
  }

  tbody .current {
    border-left: 2px solid #217346;
    background: #d2d2d2;
    color: #217346;
  }

  td {
    position: relative;
    padding: 0;
    border-right: 1px solid #d0d0d0;
    border-bottom: 1px solid #d0d0d0;
    vertical-align: bottom;
    white-space: nowrap;
  }

  td:nth-child(2) {
    border-right-color: #9b9b9b;
  }

  .spilled {
    border-right-color: transparent;
  }

  .banded {
    border-bottom-color: #d08048;
  }

  .edge {
    border-right-color: #d08048;
  }

  .filter-head {
    border-color: #ed7d31;
    background: #ed7d31;
  }

  .input-cell {
    background: #bdd7ee;
  }

  .active {
    outline: 2px solid #217346;
    outline-offset: -1px;
  }

  .text {
    height: 19px;
    padding: 0 2px;
    line-height: 20px;
  }

  .ltr {
    direction: ltr;
    font-size: 14px;
    font-kerning: none;
    text-align: left;
  }

  .long {
    text-align: right;
  }

  .num {
    direction: ltr;
    text-align: right;
  }

  .fa {
    font-size: 12px;
  }

  .strong,
  .heading {
    font-weight: 700;
  }

  .fa.strong {
    padding: 0 1px;
    font-size: 11px;
  }

  .fa.far {
    padding-right: 26px;
  }

  .clip {
    overflow: hidden;
  }

  .title {
    height: 41px;
    color: #2e75b6;
    font-size: 22px;
    font-weight: 700;
    line-height: 36px;
  }

  .acc {
    display: flex;
    justify-content: space-between;
    padding: 0 8px 0 2px;
  }

  .picked {
    color: #e0103a;
  }

  .heading {
    color: #fff;
    font-size: 13px;
  }

  .filter {
    position: absolute;
    left: 0;
    bottom: 1px;
    width: 17px;
    height: 16px;
    border: 1px solid #c6c6c6;
    background: #fff;
  }

  .chart {
    position: absolute;
    top: 100px;
    right: 380px;
    width: 500px;
    height: 420px;
    outline: 1px solid #d9d9d9;
    background: #fff;
  }

  .label {
    font-size: 11px;
    fill: #555;
  }

  .end {
    text-anchor: end;
  }

  .unit {
    font-size: 12px;
  }

  .chart button {
    position: absolute;
    width: 38px;
    height: 38px;
    border-right: 2px solid #696969;
    border-bottom: 2px solid #696969;
    background: #f0f0f0;
  }

  .chart .y-plus {
    left: 419px;
    top: 6px;
  }

  .chart .x-plus {
    left: 399px;
    top: 46px;
  }

  .chart .x-minus {
    left: 445px;
    top: 46px;
  }

  .chart .y-minus {
    left: 419px;
    top: 89px;
  }

  .chart .auto {
    left: 407px;
    top: 130px;
    width: 62px;
    height: 27px;
  }

  /* sheet tabs */
  .sheet-bar {
    display: flex;
    align-items: center;
    flex: none;
    height: 27px;
    padding: 0 28px 0 21px;
  }

  .hscroll {
    display: flex;
    width: 509px;
  }

  .hscroll .thumb {
    width: 16px;
    margin-right: 1px;
  }

  .add {
    margin-left: auto;
    margin-right: 34px;
  }

  .sheet-tab {
    align-self: flex-start;
    width: 65px;
    height: 24px;
    margin-right: 39px;
    border-bottom: 2px solid #217346;
    background: #fff;
    color: #217346;
    font-weight: 700;
  }

  .nav {
    margin-right: 23px;
  }

  .nav:last-child {
    margin-right: 0;
  }

  .status {
    display: flex;
    align-items: center;
    flex: none;
    height: 20px;
    padding: 0 8px;
    border-top: 1px solid #c6c6c6;
    background: #f1f1f1;
    font-size: 11px;
  }

  .ready {
    flex: 1;
  }

  .view {
    width: 38px;
    height: 19px;
  }

  .zoom {
    width: 16px;
    height: 19px;
  }

  input[type='range'] {
    width: 100px;
    height: 12px;
    background: linear-gradient(#ababab, #ababab) center / 100% 1px no-repeat;
    appearance: none;
  }

  input[type='range']::-webkit-slider-thumb {
    width: 4px;
    height: 11px;
    background: #555;
    appearance: none;
  }

  .percent {
    width: 38px;
    text-align: right;
  }
</style>
